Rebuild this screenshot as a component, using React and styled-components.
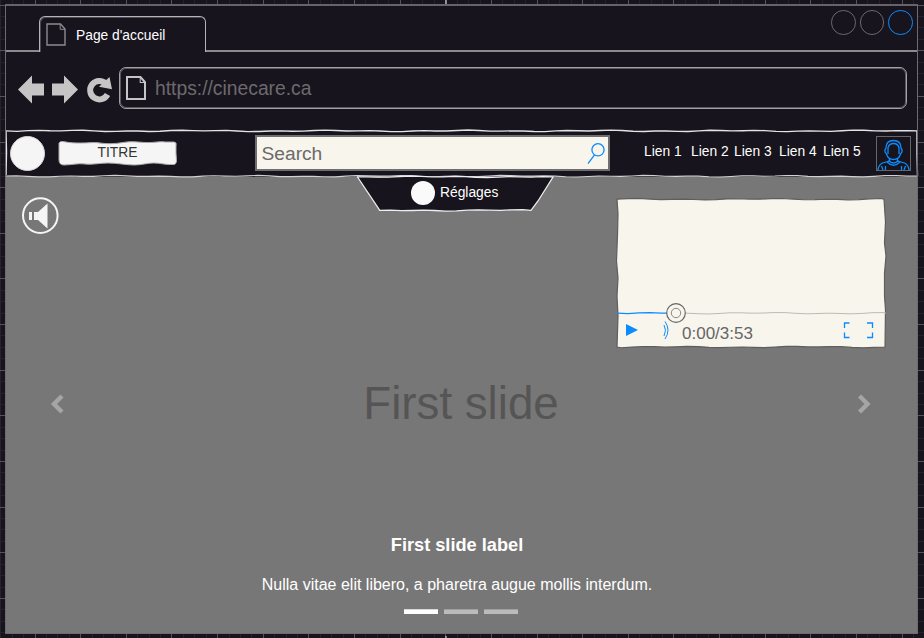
import React from "react";
import styled, { createGlobalStyle } from "styled-components";

const INK = "#18141d";
const PAPER = "#f8f5ed";
const BLUE = "#0a8cff";

const GlobalStyle = createGlobalStyle`
  * { box-sizing: border-box; }
  body { margin: 0; background: ${INK}; font-family: "Liberation Sans", Arial, sans-serif; }
`;

const Canvas = styled.div`
  position: relative;
  width: 924px;
  height: 638px;
  padding: 4px 6px 4px 5px;
  overflow: hidden;
  background: ${INK};
`;

const GridLines = styled.svg`
  position: absolute;
  inset: 0;
`;

const BrowserWindow = styled.main`
  position: relative;
  display: flex;
  flex-direction: column;
  height: 630px;
  background: ${INK};
`;

const WindowFrame = styled.div`
  position: absolute;
  inset: 0;
  border: 1.5px solid #6d6b70;
  border-top: 2px solid #66646a;
  pointer-events: none;
`;

const TabStrip = styled.header`
  display: flex;
  justify-content: space-between;
  flex: none;
  height: 48px;
  padding: 12px 5.5px 0 34px;
  border-bottom: 2px solid #8b8a8d;
`;

const Tab = styled.div`
  display: flex;
  align-items: center;
  width: 167px;
  height: 36px;
  padding-left: 6px;
  gap: 10px;
  border: 1px solid #b5b4b7;
  border-bottom: 0;
  border-radius: 6px 6px 0 0;
  box-shadow: inset 1px 1px 0 #4c494f;
  background: ${INK};
  color: #fff;
  font-size: 13.8px;
  span { padding-top: 2px; }
`;

const WindowButtons = styled.div`
  display: flex;
  gap: 4px;
  margin-top: -6px;
`;

const RoundButton = styled.span`
  width: 24.5px;
  height: 24.5px;
  border: 1px solid ${(p) => (p.$active ? BLUE : "#6b686e")};
  border-radius: 50%;
`;

const Toolbar = styled.div`
  display: flex;
  align-items: flex-start;
  flex: none;
  height: 78px;
  padding: 15px 11px 0 13px;
`;

const NavIcons = styled.svg`
  flex: none;
  margin-top: 5px;
`;

const AddressBar = styled.div`
  display: flex;
  align-items: center;
  width: 788px;
  height: 42px;
  margin-left: 1px;
  padding-left: 6px;
  gap: 9px;
  border: 1px solid #a2a1a4;
  border-radius: 7px;
  box-shadow: inset 0 0 0 1px #5a585d;
  color: #6c6a6d;
  font-size: 19.3px;
  span { padding-top: 2px; }
`;

const SiteNav = styled.nav`
  position: relative;
  display: flex;
  align-items: flex-start;
  flex: none;
  height: 47px;
  padding-left: 5px;
`;

const RoughEdge = styled.svg`
  position: absolute;
  left: 0;
  top: 0;
  overflow: visible;
`;

const Logo = styled.span`
  width: 35px;
  height: 35px;
  margin-top: 6px;
  border: 1px solid #d8d8d8;
  border-radius: 50%;
  background: #f5f5f5;
`;

const Title = styled.div`
  position: relative;
  width: 119px;
  height: 25px;
  margin: 11px 0 0 13px;
  color: #333;
  font-size: 13.8px;
  line-height: 23px;
  text-align: center;
  span { position: relative; }
`;

const SearchBox = styled.div`
  display: flex;
  align-items: center;
  justify-content: space-between;
  width: 355px;
  height: 36px;
  margin: 5px 0 0 78px;
  padding: 0 3px 0 4.5px;
  border: 2px solid #706e70;
  background: ${PAPER};
  color: #6c6a6a;
  font-size: 19.2px;
  span { padding-top: 2px; }
`;

const Links = styled.div`
  display: grid;
  grid-template-columns: 47px 43px 45px 44px 40px;
  margin: 14px 0 0 34px;
  color: #fff;
  font-size: 13.8px;
  line-height: 16px;
  white-space: nowrap;
`;

const Avatar = styled.div`
  width: 35px;
  height: 35px;
  margin: 6px 0 0 13px;
  border: 1.5px solid #686569;
  svg { display: block; }
`;

const Stage = styled.section`
  position: relative;
  display: flex;
  flex-direction: column;
  align-items: center;
  flex: 1;
  background: #777;
`;

const Settings = styled.div`
  position: relative;
  display: flex;
  align-items: center;
  width: 197px;
  height: 36px;
  padding: 0 0 5px 54px;
  margin-left: -12px;
  gap: 5px;
  color: #fff;
  font-size: 13.8px;
`;

const SettingsDot = styled.span`
  position: relative;
  width: 24px;
  height: 24px;
  border-radius: 50%;
  background: #fafafa;
`;

const SettingsLabel = styled.span`
  position: relative;
`;

const Sound = styled.svg`
  position: absolute;
  left: 16px;
  top: 20px;
`;

const Player = styled.div`
  position: absolute;
  left: 610px;
  top: 20px;
  width: 273px;
  height: 153px;
`;

const PlayerTime = styled.span`
  position: absolute;
  left: 67px;
  top: 127px;
  color: #666;
  font-size: 17px;
  line-height: 20px;
`;

const SlideRow = styled.div`
  display: flex;
  align-items: center;
  justify-content: space-between;
  width: 100%;
  height: 60px;
  margin-top: 161px;
  padding: 0 46px 0 45px;
`;

const SlideTitle = styled.h1`
  margin: 0;
  color: #555;
  font-size: 45.7px;
  font-weight: 400;
  line-height: 60px;
`;

const Caption = styled.div`
  display: flex;
  flex-direction: column;
  align-items: center;
  margin: 100px 9px 0 0;
  color: #fff;
  h2 { margin: 0; font-size: 18.2px; line-height: 22px; }
  p { margin: 19px 0 0; font-size: 16px; line-height: 20px; white-space: nowrap; }
`;

const Indicators = styled.div`
  display: flex;
  gap: 6px;
  margin: 14px 0 0 8px;
`;

const Indicator = styled.span`
  width: 34px;
  height: 5px;
  background: ${(p) => (p.$active ? "#fff" : "#bbb")};
  border-top: 1px solid ${(p) => (p.$active ? "#d8d8d8" : "#a0a0a0")};
`;

const PageIcon = ({ w, h, stroke, weight }) => (
  <svg width={w} height={h} viewBox="0 0 20 23" preserveAspectRatio="none" fill="none" stroke={stroke} strokeWidth={weight}>
    <path d="M1 1H14.5L19 6V22H1Z" />
    <path d="M14.2 1V6.3H19" strokeWidth="1" />
  </svg>
);

const Chevron = ({ flip }) => (
  <svg width="15" height="20" viewBox="0 0 15 20" fill="none" stroke="#a5a5a5" strokeWidth="4.4">
    <path d={flip ? "M2.5 2L10.5 10L2.5 18" : "M12 2L4 10L12 18"} />
  </svg>
);

const range = (n) => Array.from({ length: n }, (_, i) => i);

// Gentle deterministic wobble for the hand-drawn horizontal strokes.
const wave = (from, to, y, seed, amp = 0.7) => {
  const step = from < to ? 11 : -11;
  const points = [`${from} ${y}`];
  for (let x = from + step; step > 0 ? x < to : x > to; x += step) {
    const d = Math.sin(x * 0.13 + seed) * amp * 0.6 + Math.sin(x * 0.047 + seed * 2) * amp * 0.6;
    points.push(`${x} ${(y + d).toFixed(2)}`);
  }
  points.push(`${to} ${y}`);
  return points.join("L");
};

export default function App() {
  return (
    <>
      <GlobalStyle />
      <Canvas>
        <GridLines width="924" height="638">
          {range(82).map((i) => (
            <path key={`v${i}`} d={`M${Math.round(0.3 + i * 11.41) + 0.5} 0V638`} stroke={i % 4 === 3 ? "#555259" : "#25222a"} />
          ))}
          {range(57).map((i) => (
            <path key={`h${i}`} d={`M0 ${Math.round(4.6 + i * 11.41) + 0.5}H924`} stroke={i % 4 === 0 ? "#555259" : "#25222a"} />
          ))}
          <path d="M446 0V4M446 636V638" stroke="#aaa" strokeWidth="1.6" />
        </GridLines>
        <BrowserWindow>
          <TabStrip>
            <Tab>
              <PageIcon w={20} h={23} stroke="#8c8b8e" weight={1.4} />
              <span>Page d'accueil</span>
            </Tab>
            <WindowButtons>
              <RoundButton />
              <RoundButton />
              <RoundButton $active />
            </WindowButtons>
          </TabStrip>
          <Toolbar>
            <NavIcons width="100" height="34" viewBox="18 72 100 34">
              <path d="M18 89.5L32 75.5V83.5H44V95.5H32V103.5Z" fill="#c5c5c5" />
              <path d="M78 89.5L64 75.5V83.5H52V95.5H64V103.5Z" fill="#c5c5c5" />
              <path d="M106 83.8A9.2 9.2 0 1 0 107.5 94.5" fill="none" stroke="#c5c5c5" strokeWidth="6" />
              <path d="M109.5 77L112 89.3L99 86.8Z" fill="#c5c5c5" />
            </NavIcons>
            <AddressBar>
              <PageIcon w={20} h={24} stroke="#c5c5c5" weight={2} />
              <span>https://cinecare.ca</span>
            </AddressBar>
          </Toolbar>
          <SiteNav>
            <RoughEdge width="913" height="47" fill="none" stroke="#e4e4e4" strokeWidth="1.4">
              <path d={`M${wave(1, 912, 0.9, 1)}L912 24L912.5 46`} />
              <path d="M1 1L1.5 22L1 46" />
            </RoughEdge>
            <Logo />
            <Title>
              <RoughEdge width="119" height="25">
                <path d="M1 2Q2 0 5 .5C12 2 17 2 23 2C31 2 36 1 42 2S57 3 65 1.5S78 1 87 1.5S101 0 107 1L116 1Q119 1 118 5V12L118.5 20Q118 24 115 23.5C107 24 103 22 96 22S84 24 76 24S59 22 50 22S34 24 27 23S13 24 6 24Q1 24 1 19V11Z" fill="#f5f5f5" stroke="#aaa" />
              </RoughEdge>
              <span>TITRE</span>
            </Title>
            <SearchBox>
              <span>Search</span>
              <svg width="18" height="22" fill="none" stroke={BLUE} strokeWidth="1.3">
                <circle cx="11" cy="7.8" r="6.1" />
                <path d="M7.5 12.8L1 21.6" />
              </svg>
            </SearchBox>
            <Links>
              {range(5).map((i) => <span key={i}>Lien {i + 1}</span>)}
            </Links>
            <Avatar>
              <svg width="33" height="33" fill="none" stroke={BLUE} strokeWidth="1.3">
                <path d="M9.5 17Q6.5 14 9 11C9 6 12 3.5 16.5 3.5S24 6 24 11Q26.5 14 23.5 17Q22 22.5 16.5 22.5T9.5 17Z" />
                <path d="M11 17V11Q12 6.5 16.5 6.5T22 11V17" />
                <path d="M12.5 21V24L5.5 26Q1.5 28 1 33M20.5 21V24L27.5 26Q31.5 28 32 33" />
                <path d="M11.5 23.5Q16.5 28.5 21.5 23.5M10 25Q16.5 31.5 23 25M4.5 29L6 33M8.5 29V33M24.5 29V33M28.5 29L27 33" />
              </svg>
            </Avatar>
          </SiteNav>
          <Stage>
            <RoughEdge width="913" height="4">
              <path d={`M0 -1L${wave(0, 913, -0.8, 3)}L913 -2H0Z`} fill={INK} />
              <path d={`M${wave(0, 913, -0.8, 3)}`} fill="none" stroke="#d2d2d2" strokeWidth="1.2" />
            </RoughEdge>
            <Settings>
              <RoughEdge width="197" height="36">
                <path d={`M0.5 0L22.5 33L${wave(22.5, 174, 33.3, 2)}L181 24L196 0L${wave(196, 0, -0.2, 4)}Z`} fill={INK} stroke="#eee" strokeWidth="1.3" />
              </RoughEdge>
              <SettingsDot />
              <SettingsLabel>Réglages</SettingsLabel>
            </Settings>
            <Sound width="38" height="38">
              <circle cx="19.3" cy="18.6" r="17.3" fill="none" stroke="#f5f5f5" strokeWidth="2" />
              <path d="M8 15H11V23H8ZM13 15H17L26.5 6.5V31.5L17 23H13Z" fill="#f5f5f5" />
            </Sound>
            <Player>
              <svg width="273" height="153" fill="none">
                <path d={`M${wave(2, 269, 2.2, 2)}L270.5 25L269.5 46L271 59L269.5 76V99L270.5 113L270 150L${wave(270, 2, 150, 1)}L3 119L2 99L3 81L1.5 64L2.5 38L3 17Z`} fill={PAPER} stroke="#5f5d5d" strokeWidth="1.2" />
                <path d={`M${wave(60, 271, 116.2, 2)}`} stroke="#bbb" />
                <path d={`M${wave(2, 52, 116.2, 1)}`} stroke={BLUE} strokeWidth="1.2" />
                <circle cx="61" cy="116" r="9.3" fill={PAPER} stroke="#666" strokeWidth="1.2" />
                <circle cx="61" cy="116" r="4.7" stroke="#888" />
                <path d="M11 127V139L23 133Z" fill={BLUE} />
                <path d="M50 124.5Q56 133 50 142M49 128Q52 133 49 139" stroke={BLUE} strokeWidth="1" />
                <path d="M234.5 126H229.5V131M229.5 135.5V140.5H234.5M252 126H257.5V131M257.5 135.5V140.5H252" stroke={BLUE} strokeWidth="1.3" />
              </svg>
              <PlayerTime>0:00/3:53</PlayerTime>
            </Player>
            <SlideRow>
              <Chevron />
              <SlideTitle>First slide</SlideTitle>
              <Chevron flip />
            </SlideRow>
            <Caption>
              <h2>First slide label</h2>
              <p>Nulla vitae elit libero, a pharetra augue mollis interdum.</p>
              <Indicators>
                <Indicator $active />
                <Indicator />
                <Indicator />
              </Indicators>
            </Caption>
          </Stage>
          <WindowFrame />
        </BrowserWindow>
      </Canvas>
    </>
  );
}
